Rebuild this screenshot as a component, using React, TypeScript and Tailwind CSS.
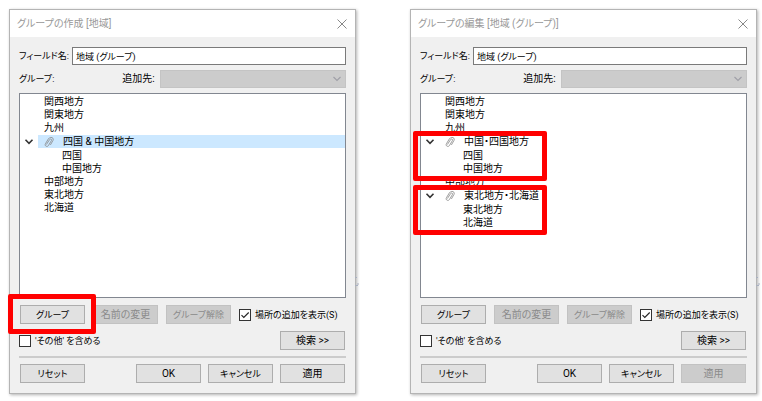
import { useId } from "react";
import type { ReactNode } from "react";

type GroupNode = {
  label: string;
  children?: string[];
  selected?: boolean;
};

type GroupDialogProps = {
  title: string;
  fieldName: string;
  nodes: GroupNode[];
  highlightGroupButton?: boolean;
  applyDisabled?: boolean;
};

const createNodes: GroupNode[] = [
  { label: "関西地方" },
  { label: "関東地方" },
  { label: "九州" },
  { label: "四国 & 中国地方", children: ["四国", "中国地方"], selected: true },
  { label: "中部地方" },
  { label: "東北地方" },
  { label: "北海道" },
];

const editNodes: GroupNode[] = [
  { label: "関西地方" },
  { label: "関東地方" },
  { label: "九州" },
  { label: "中国・四国地方", children: ["四国", "中国地方"] },
  { label: "中部地方" },
  { label: "東北地方・北海道", children: ["東北地方", "北海道"] },
];

function PaperclipIcon() {
  return (
    <svg viewBox="0 0 12 12" className="h-3 w-3" fill="none" stroke="#858585" strokeLinecap="round" aria-hidden="true">
      <path
        d="M3.6 8.2 6.6 3.6c.9-1.3 2.6-.3 1.8 1L5.4 9.6c-1.1 1.7-4.2.5-3-1.8L5.3 3c1.7-2.7 6.1-1.7 4.7 1.4L7.6 8.6"
        strokeWidth="0.8"
      />
    </svg>
  );
}

// compact is for captions that are mostly kana
function DialogButton({
  children,
  disabled,
  compact,
}: {
  children: ReactNode;
  disabled?: boolean;
  compact?: boolean;
}) {
  return (
    <button
      type="button"
      disabled={disabled}
      className={`h-[19px] w-[65px] shrink-0 whitespace-nowrap border border-[#adadad] bg-[#e1e1e1] text-center leading-4 text-black disabled:border-[#c2c2c2] disabled:bg-[#cccccc] disabled:text-[#8a8a8a] ${
        compact ? "text-[9px]" : "text-[10px]"
      }`}
    >
      {children}
    </button>
  );
}

function DialogCheckbox({ label, defaultChecked }: { label: string; defaultChecked?: boolean }) {
  const id = useId();

  return (
    <div className="flex items-center gap-1">
      <span className="relative h-3 w-3">
        <input
          id={id}
          type="checkbox"
          defaultChecked={defaultChecked}
          className="peer block h-3 w-3 appearance-none border border-[#333333] bg-white"
        />
        <svg
          viewBox="0 0 12 12"
          className="pointer-events-none absolute inset-0 hidden h-3 w-3 peer-checked:block"
          fill="none"
          stroke="#222222"
          aria-hidden="true"
        >
          <path d="M2.5 6.2 4.8 8.5 9.7 3.5" strokeWidth="1.1" />
        </svg>
      </span>
      <label htmlFor={id} className="whitespace-nowrap text-[9px]">
        {label}
      </label>
    </div>
  );
}

function GroupTree({ nodes, highlightGroups }: { nodes: GroupNode[]; highlightGroups: boolean }) {
  return (
    <ul className="h-[205px] border border-[#828790] bg-white pt-px leading-[13px]">
      {nodes.map((node) =>
        node.children ? (
          <li key={node.label} className="relative">
            <div className="flex h-[15px] items-center">
              <button type="button" aria-label={node.label} className="flex w-[18px] justify-center">
                <svg viewBox="0 0 10 8" className="h-2 w-[10px]" fill="none" stroke="#333333" aria-hidden="true">
                  <path d="M1.5 1.8 5 5.3 8.5 1.8" strokeWidth="1.6" />
                </svg>
              </button>
              <div className={`flex grow items-center gap-2 pl-[5px] ${node.selected ? "bg-[#cce8ff]" : ""}`}>
                <PaperclipIcon />
                <span>{node.label}</span>
              </div>
            </div>
            <ul>
              {node.children.map((child) => (
                <li key={child} className="pl-[42px]">
                  {child}
                </li>
              ))}
            </ul>
            {highlightGroups && (
              <div className="pointer-events-none absolute -top-[3px] -bottom-[6px] -left-2 w-[134px] rounded-xs border-5 border-[#ff0000]" />
            )}
          </li>
        ) : (
          <li key={node.label} className="pl-6">
            {node.label}
          </li>
        ),
      )}
    </ul>
  );
}

function GroupDialog({ title, fieldName, nodes, highlightGroupButton, applyDisabled }: GroupDialogProps) {
  const fieldId = useId();
  const targetId = useId();

  return (
    <section className="relative min-w-0 flex-1 border border-[#b4b4b4] bg-[#f0f0f0] shadow-[1px_1px_3px_rgba(0,0,0,0.3)]">
      <header className="flex h-[27px] items-center justify-between bg-white px-[7px] text-[#999999]">
        <h2 className="text-[10px]">{title}</h2>
        <button type="button" aria-label="閉じる">
          <svg viewBox="0 0 12 12" className="h-3 w-3" fill="none" stroke="#888888" aria-hidden="true">
            <path d="M1.5 1.5 10.5 10.5M10.5 1.5 1.5 10.5" />
          </svg>
        </button>
      </header>

      <div className="px-[9px] pt-[10px] pb-[10px]">
        <div className="flex items-center">
          <label htmlFor={fieldId} className="w-[53px] shrink-0 whitespace-nowrap text-[9px]">
            フィールド名:
          </label>
          <input
            id={fieldId}
            type="text"
            defaultValue={fieldName}
            className="h-[18px] min-w-0 grow border border-[#7a7a7a] bg-white px-[3px] text-[9px]"
          />
        </div>

        <div className="mt-[5px] flex items-center">
          <span className="grow text-[9px]">グループ:</span>
          <label htmlFor={targetId} className="mr-[5px]">
            追加先:
          </label>
          <div className="relative w-[57%]">
            <select
              id={targetId}
              disabled
              className="block h-[18px] w-full appearance-none border border-[#c4c4c4] bg-[#cccccc] opacity-100"
            />
            <svg
              viewBox="0 0 10 8"
              className="pointer-events-none absolute top-[5px] right-1 h-2 w-[10px]"
              fill="none"
              stroke="#a0a0a8"
              aria-hidden="true"
            >
              <path d="M1.5 2 5 5.5 8.5 2" strokeWidth="1.2" />
            </svg>
          </div>
        </div>

        <div className="mt-[5px]">
          <GroupTree nodes={nodes} highlightGroups={!highlightGroupButton} />
        </div>

        <div className="mt-[7px] flex items-center gap-2 px-px">
          <div className="relative">
            <DialogButton compact>グループ</DialogButton>
            {highlightGroupButton && (
              <div className="pointer-events-none absolute -top-[11px] -right-[11px] -bottom-[10px] -left-3 rounded-xs border-5 border-[#ff0000]" />
            )}
          </div>
          <DialogButton disabled>名前の変更</DialogButton>
          <DialogButton disabled compact>
            グループ解除
          </DialogButton>
          <DialogCheckbox label="場所の追加を表示(S)" defaultChecked />
        </div>

        <div className="mt-[7px] flex items-center justify-between pr-px">
          <DialogCheckbox label="'その他' を含める" />
          <DialogButton>検索 &gt;&gt;</DialogButton>
        </div>

        <hr className="mt-1.5 border-t-2 border-[#cccccc]" />

        <div className="mt-1.5 flex gap-[7px] px-px">
          <div className="grow">
            <DialogButton compact>リセット</DialogButton>
          </div>
          <DialogButton>OK</DialogButton>
          <DialogButton compact>キャンセル</DialogButton>
          <DialogButton disabled={applyDisabled}>適用</DialogButton>
        </div>
      </div>

      {/* grip marks on the window edge */}
      <svg
        viewBox="0 0 4 10"
        className="pointer-events-none absolute top-[267px] -right-1 h-[10px] w-1"
        stroke="#a9b0c0"
        aria-hidden="true"
      >
        <path d="M0 .5h2M0 8.5h3M3 6v2" />
      </svg>
    </section>
  );
}

export default function App() {
  return (
    <main className="flex min-h-screen items-start gap-[54px] bg-white pt-[9px] pr-[5px] pb-1 pl-[9px] font-[Roboto,'Noto_Sans_CJK_JP',sans-serif] text-[10px] leading-4 text-black [font-feature-settings:'palt']">
      <GroupDialog title="グループの作成 [地域]" fieldName="地域 (グループ)" nodes={createNodes} highlightGroupButton />
      <GroupDialog title="グループの編集 [地域 (グループ)]" fieldName="地域 (グループ)" nodes={editNodes} applyDisabled />
    </main>
  );
}
